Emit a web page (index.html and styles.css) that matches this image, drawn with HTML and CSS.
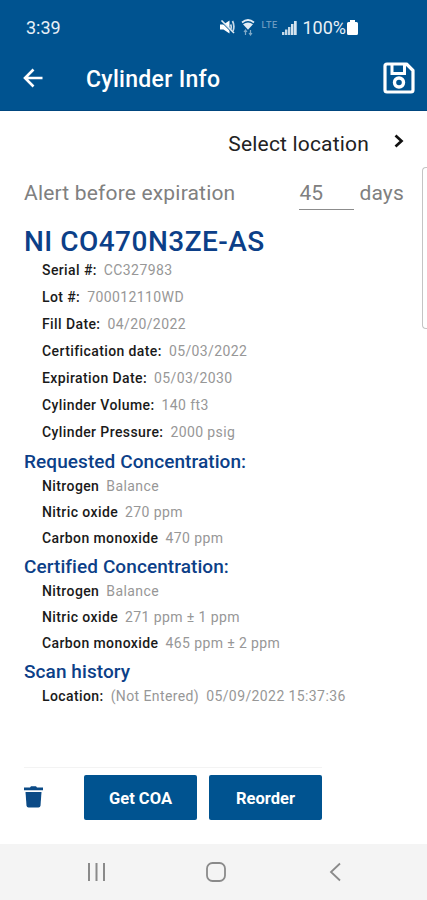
FILE: index.html
```html
<!DOCTYPE html>
<html lang="en">

<head>
  <title>Cylinder Info</title>
  <meta charset="utf-8">
  <meta name="viewport" content="width=device-width, initial-scale=1">

  <link rel="stylesheet" href="styles.css">
</head>

<body>

  <div class="status-bar">
    <span class="clock">3:39</span>
    <div class="status-icons">
      <svg class="icon-mute" width="15" height="14" viewBox="0 0 15 14">
        <path d="M0 4.500h3.500l6-4v13l-6-4H0z" fill="#fff"/>
        <path d="M1 1l12.500 12.500" stroke="#005390" stroke-width="1.500"/>
        <path d="M1.500 .5L14 13" stroke="#e3edf5" stroke-width="1.600"/>
        <path d="M10.500 4.500q1.500 2.500 0 5M12.500 1q2.500 5 .5 10" stroke="#c6d9e8" stroke-width="1.700" fill="none"/>
      </svg>
      <svg class="icon-wifi" width="14" height="17" viewBox="0 0 14 17">
        <path d="M1 3.500Q7-1.500 13 3.500" stroke="#e3edf5" stroke-width="1.700" fill="none"/>
        <path d="M2 5.300Q7 1.800 12 5.300L7 10.800z" fill="#e3edf5"/>
        <path d="M4.500 16v-5M3 13l1.500-2L6 13M9.500 11v5M8 14l1.500 2 1.500-2" stroke="#7fa9c8" stroke-width="1.200" fill="none"/>
      </svg>
      <span class="carrier">LTE</span>
      <svg class="icon-signal" width="15" height="15" viewBox="0 0 15 15">
        <path d="M0 12h2.400v3H0zM3 9.500h2.400V15H3zM6 7h2.400v8H6z" fill="#c6d9e8"/>
        <path d="M9 4h2.500v11H9zM12 1h2.700v14H12z" fill="#d6e4ef"/>
      </svg>
      <span class="battery-level">100%</span>
      <svg class="icon-battery" width="11" height="15" viewBox="0 0 11 15">
        <path d="M3 0h5v2h1.500q1.500 0 1.500 1.500v10q0 1.500-1.500 1.500h-8Q0 15 0 13.500v-10Q0 2 1.500 2H3z" fill="#fff"/>
      </svg>
    </div>
  </div>

  <div class="title-bar">
    <svg class="icon-back" width="20" height="20" viewBox="0 0 20 20">
      <path d="M10.500 1.500L2 10l8.500 8.500M2 10h17.500" stroke="#fff" stroke-width="2.600" fill="none"/>
    </svg>
    <span class="title">Cylinder Info</span>
    <svg class="icon-save" width="32" height="32" viewBox="0 0 32 32">
      <path d="M4 2h19.500L30 8.500V28q0 2-2 2H4q-2 0-2-2V4q0-2 2-2z" stroke="#fff" stroke-width="3.200" stroke-linejoin="round" fill="none"/>
      <path d="M9 3v8.500h12.500V3" stroke="#fff" stroke-width="3" fill="none"/>
      <circle cx="16" cy="20.500" r="4.500" stroke="#fff" stroke-width="3.400" fill="none"/>
    </svg>
  </div>

  <div class="content">
    <div class="location-row">
      <span class="location-label">Select location</span>
      <svg class="icon-chevron" width="10" height="14" viewBox="0 0 10 14">
        <path d="M1.500 1.500L7.500 7l-6 5.500" stroke="#111" stroke-width="2.700" fill="none"/>
      </svg>
    </div>

    <div class="alert-row">
      <span class="alert-label">Alert before expiration</span>
      <span class="alert-value">45</span>
      <span class="alert-unit">days</span>
    </div>

    <div class="product">NI CO470N3ZE-AS</div>

    <div class="details">
      <div class="row"><span class="bold">Serial #:</span><span class="value">CC327983</span></div>
      <div class="row"><span class="bold">Lot #:</span><span class="value">700012110WD</span></div>
      <div class="row"><span class="bold">Fill Date:</span><span class="value">04/20/2022</span></div>
      <div class="row"><span class="bold">Certification date:</span><span class="value">05/03/2022</span></div>
      <div class="row"><span class="bold">Expiration Date:</span><span class="value">05/03/2030</span></div>
      <div class="row"><span class="bold">Cylinder Volume:</span><span class="value">140 ft3</span></div>
      <div class="row"><span class="bold">Cylinder Pressure:</span><span class="value">2000 psig</span></div>
    </div>

    <div class="section">Requested Concentration:</div>
    <div class="gases">
      <div class="row"><span class="bold">Nitrogen</span><span class="value">Balance</span></div>
      <div class="row"><span class="bold">Nitric oxide</span><span class="value">270 ppm</span></div>
      <div class="row"><span class="bold">Carbon monoxide</span><span class="value">470 ppm</span></div>
    </div>

    <div class="section">Certified Concentration:</div>
    <div class="gases">
      <div class="row"><span class="bold">Nitrogen</span><span class="value">Balance</span></div>
      <div class="row"><span class="bold">Nitric oxide</span><span class="value">271 ppm ± 1 ppm</span></div>
      <div class="row"><span class="bold">Carbon monoxide</span><span class="value">465 ppm ± 2 ppm</span></div>
    </div>

    <div class="section">Scan history</div>
    <div class="gases">
      <div class="row"><span class="bold">Location:</span><span class="value">(Not Entered)</span><span class="value">05/09/2022 15:37:36</span></div>
    </div>

    <div class="side-handle"></div>
  </div>

  <div class="actions">
    <svg class="icon-trash" width="19" height="22" viewBox="0 0 19 22">
      <path d="M0 1.500h6L7 .3h5l1 1.200h6v2.800H0z" fill="#0b4a86"/>
      <path d="M1.500 6h16l-1 13.500q-.2 2-2 2h-10q-1.800 0-2-2z" fill="#0b4a86"/>
    </svg>
    <div class="button">Get COA</div>
    <div class="button">Reorder</div>
  </div>

  <div class="nav-bar">
    <svg width="20" height="20" viewBox="0 0 20 20">
      <path d="M3 1v18M10.500 1v18M18 1v18" stroke="#8a8a8a" stroke-width="2" fill="none"/>
    </svg>
    <svg width="20" height="20" viewBox="0 0 20 20">
      <rect x="1" y="1" width="18" height="18" rx="5.500" stroke="#8a8a8a" stroke-width="1.800" fill="none"/>
    </svg>
    <svg width="20" height="20" viewBox="0 0 20 20">
      <path d="M14 1.500L5 10l9 8.500" stroke="#8a8a8a" stroke-width="1.800" fill="none"/>
    </svg>
  </div>

</body>

</html>
```

FILE: styles.css
```css
* {
  box-sizing: border-box;
}

body {
  margin: 0;
  height: 900px;
  display: flex;
  flex-direction: column;
  overflow: hidden;
  background: #fff;
  font-family: Roboto, "Liberation Sans", sans-serif;
  white-space: nowrap;
}

svg {
  display: block;
  flex: none;
}

.status-bar {
  height: 54px;
  padding: 0 69px 0 26px;
  display: flex;
  justify-content: space-between;
  align-items: center;
  background: #005390;
  color: #e8f0f7;
}

.clock {
  font-size: 18px;
}

.status-icons {
  display: flex;
  align-items: center;
}

.icon-wifi {
  margin-left: 6px;
}

.carrier {
  width: 18px;
  margin: -5px 0 0 6px;
  font-size: 9px;
  font-weight: 500;
  letter-spacing: 0.7px;
  color: #6b9ac0;
}

.icon-signal {
  margin-left: 3px;
}

.battery-level {
  margin-left: 5px;
  font-size: 18px;
}

.icon-battery {
  margin-left: 1px;
}

.title-bar {
  height: 57px;
  padding: 0 12px 8px 23px;
  display: flex;
  align-items: center;
  background: #005390;
  border-bottom: 1px solid #00467f;
  color: #fff;
}

.title {
  margin: 2px 0 0 43px;
  font-size: 23px;
  font-weight: 500;
  letter-spacing: 0.3px;
}

.icon-save {
  margin-left: auto;
}

.content {
  position: relative;
  height: 656px;
  padding: 18px 23px 0 24px;
}

.location-row {
  height: 30px;
  display: flex;
  justify-content: flex-end;
  align-items: center;
}

.location-label {
  font-size: 21px;
  letter-spacing: 0.18px;
  color: #222;
}

.icon-chevron {
  margin: -6px 0 0 25px;
}

.alert-row {
  height: 34px;
  margin-top: 17px;
  display: flex;
  align-items: flex-start;
  font-size: 21px;
  line-height: 34px;
  letter-spacing: 0.18px;
  color: #808080;
}

.alert-value {
  width: 55px;
  height: 34px;
  margin-left: auto;
  border-bottom: 1px solid #8c8c8c;
}

.alert-unit {
  margin-left: 5px;
}

.product {
  height: 34px;
  margin-top: 15px;
  font-size: 28px;
  font-weight: 500;
  line-height: 34px;
  letter-spacing: 0.48px;
  color: #0c3f88;
}

.details,
.gases {
  padding-left: 18px;
}

.details {
  margin-top: -2px;
}

.row {
  height: 27px;
  display: flex;
  gap: 7px;
  font-size: 14px;
  line-height: 27px;
  letter-spacing: 0.4px;
}

.gases .row {
  height: 26px;
  line-height: 26px;
}

.bold {
  font-weight: 500;
  color: #1a1a1a;
}

.value {
  color: #979797;
}

.section {
  height: 25px;
  margin-top: 2px;
  font-size: 19px;
  font-weight: 500;
  line-height: 28px;
  letter-spacing: 0.08px;
  color: #0c3f88;
}

/* drawer edge peeking in from the right */
.side-handle {
  position: absolute;
  top: 56px;
  right: 0;
  width: 5px;
  height: 162px;
  border: 1px solid #c4c4c4;
  border-right: 0;
  border-radius: 4px 0 0 4px;
}

.actions {
  height: 77px;
  width: 298px;
  margin-left: 24px;
  padding-top: 7px;
  display: flex;
  border-top: 1px solid #f3f3f3;
}

.icon-trash {
  margin: 11px 41px 0 0;
}

.button {
  width: 113px;
  height: 45px;
  margin-right: 12px;
  flex: none;
  border-radius: 2px;
  background: #005390;
  color: #fff;
  font-size: 16.5px;
  font-weight: 700;
  line-height: 47px;
  text-align: center;
}

.nav-bar {
  height: 56px;
  padding: 0 81px 0 86px;
  display: flex;
  justify-content: space-between;
  align-items: center;
  background: #f4f4f4;
}
```
